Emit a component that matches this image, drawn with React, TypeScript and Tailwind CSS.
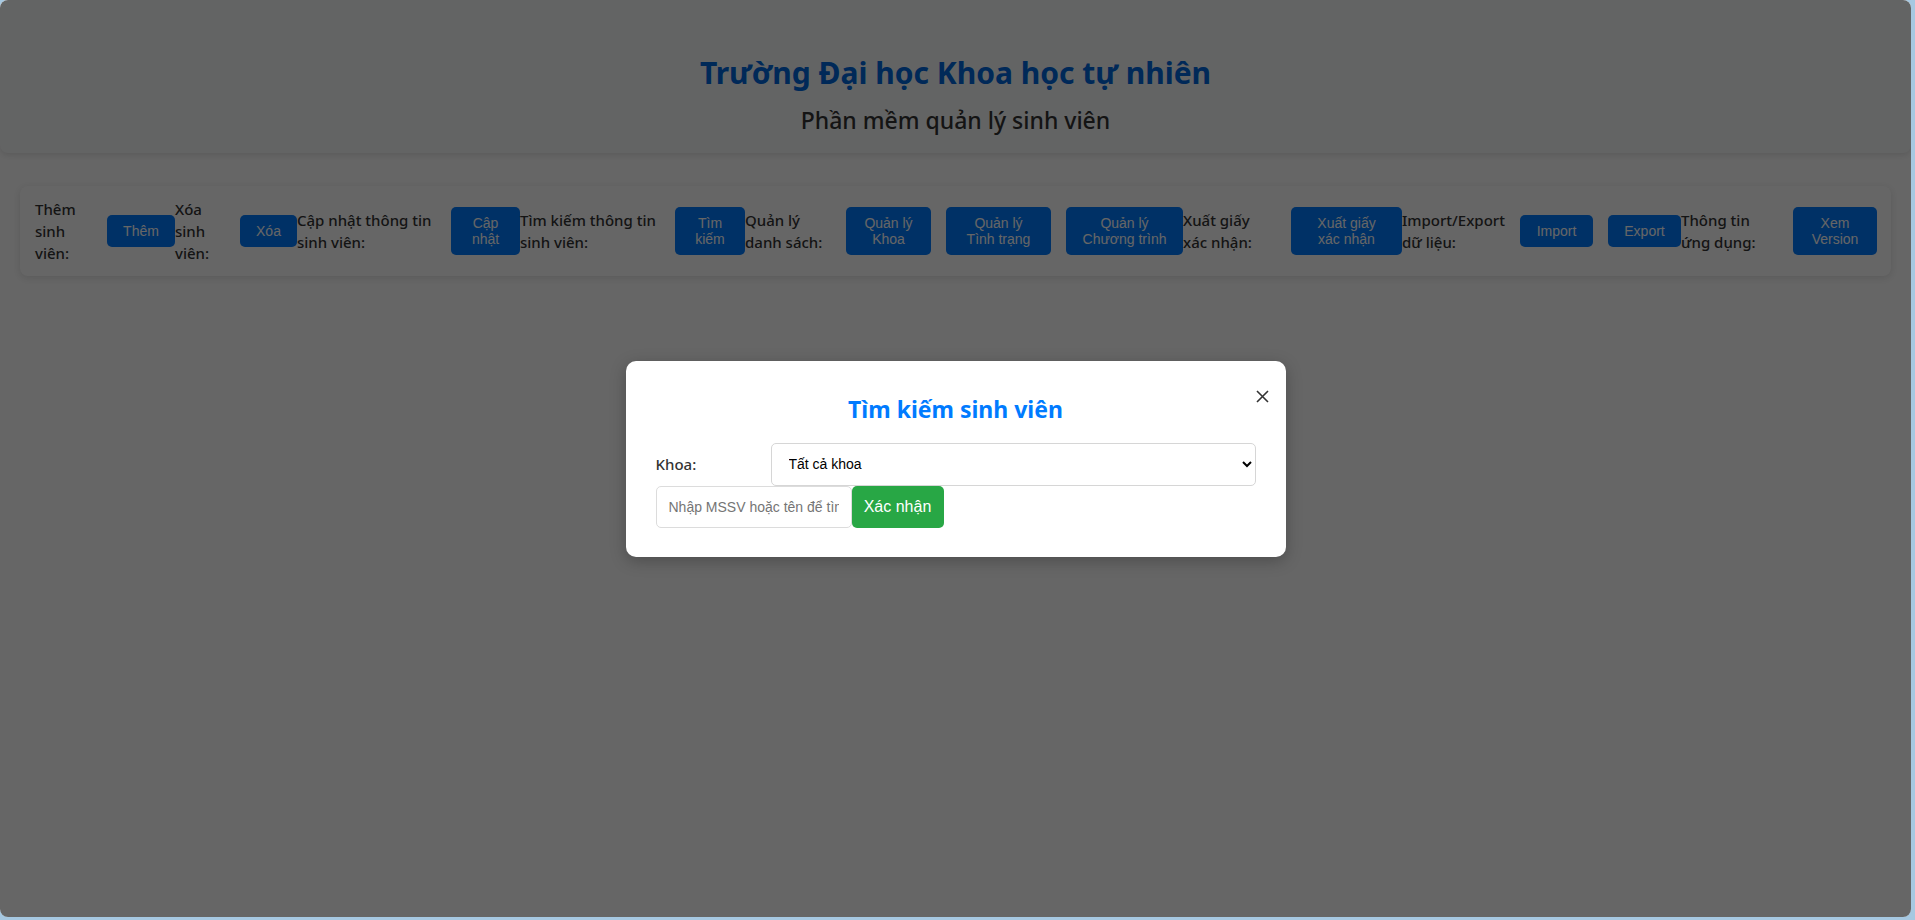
import { useState } from "react";

const font = "font-['Noto_Sans',sans-serif]";

type Group = {
  label: string;
  w: string;
  buttons: { text: string; w: string }[];
};

const groups: Group[] = [
  { label: "Thêm sinh viên:", w: "w-[72px] pr-[24px]", buttons: [{ text: "Thêm", w: "w-[68px]" }] },
  { label: "Xóa sinh viên:", w: "w-[65px] pr-[15px]", buttons: [{ text: "Xóa", w: "w-[57px]" }] },
  { label: "Cập nhật thông tin sinh viên:", w: "w-[154px] pr-[6px]", buttons: [{ text: "Cập nhật", w: "w-[69px]" }] },
  { label: "Tìm kiếm thông tin sinh viên:", w: "w-[155px] pr-[10px]", buttons: [{ text: "Tìm kiếm", w: "w-[70px]" }] },
  {
    label: "Quản lý danh sách:",
    w: "w-[101px] pr-[16px]",
    buttons: [
      { text: "Quản lý Khoa", w: "w-[85px]" },
      { text: "Quản lý Tình trạng", w: "w-[105px]" },
      { text: "Quản lý Chương trình", w: "w-[117px]" },
    ],
  },
  { label: "Xuất giấy xác nhận:", w: "w-[108px] pr-[28px]", buttons: [{ text: "Xuất giấy xác nhận", w: "w-[111px]" }] },
  {
    label: "Import/Export dữ liệu:",
    w: "w-[118px] pr-[8px]",
    buttons: [
      { text: "Import", w: "w-[73px]" },
      { text: "Export", w: "w-[73px]" },
    ],
  },
  { label: "Thông tin ứng dụng:", w: "w-[112px] pr-[27px]", buttons: [{ text: "Xem Version", w: "w-[84px]" }] },
];

function Toolbar() {
  return (
    <div className="mx-[20px] mt-[33px] bg-white rounded-[8px] shadow-[0_2px_8px_rgba(0,0,0,0.12)] px-[15px] py-[12px] flex items-center">
      {groups.map((g) => (
        <div key={g.label} className="flex items-center shrink-0">
          <label className={`${g.w} shrink-0 text-[15px] leading-[22px] text-[#333] font-medium ${font}`}>
            {g.label}
          </label>
          <div className="flex items-center gap-[15px]">
            {g.buttons.map((b) => (
              <button
                key={b.text}
                className={`${b.w} shrink-0 bg-[#007bff] text-white rounded-[5px] px-[15px] py-[8px] text-[14px] leading-[16px] font-['Liberation_Sans',Arial,sans-serif]`}
              >
                {b.text}
              </button>
            ))}
          </div>
        </div>
      ))}
    </div>
  );
}

function SearchModal() {
  const [khoa, setKhoa] = useState("all");
  return (
    <div className="relative w-[660px] bg-white rounded-[10px] px-[30px] pt-[33px] pb-[29px] shadow-[0_4px_16px_rgba(0,0,0,0.25)]">
      <button className="absolute right-[16px] top-[29px] w-[14px] h-[14px] flex items-center justify-center text-[#333]">
        <svg width="13" height="13" viewBox="0 0 13 13" fill="none" stroke="currentColor" strokeWidth="1.6">
          <path d="M1 1 L12 12 M12 1 L1 12" />
        </svg>
      </button>
      <h2 className={`text-center text-[23px] leading-[30px] font-bold text-[#007bff] ${font}`}>
        Tìm kiếm sinh viên
      </h2>
      <div className="flex items-center mt-[19px]">
        <label className={`w-[115px] shrink-0 text-[15px] font-medium text-[#333] ${font}`}>Khoa:</label>
        <select
          value={khoa}
          onChange={(e) => setKhoa(e.target.value)}
          className="flex-1 h-[43px] border border-[#d6d6d6] rounded-[5px] bg-white pl-[13px] pr-[6px] text-[14px] text-black font-['Liberation_Sans',Arial,sans-serif]"
        >
          <option value="all">Tất cả khoa</option>
        </select>
      </div>
      <div className="flex items-center">
        <input
          placeholder="Nhập MSSV hoặc tên để tìm kiếm"
          className="w-[196px] h-[42px] border border-[#dcdcdc] rounded-[5px] px-[12px] text-[14px] placeholder:text-[#757575] font-['Liberation_Sans',Arial,sans-serif] outline-none"
        />
        <button className="h-[42px] w-[92px] bg-[#28a745] text-white rounded-[5px] text-[16px] font-['Liberation_Sans',Arial,sans-serif]">
          Xác nhận
        </button>
      </div>
    </div>
  );
}

export default function App() {
  return (
    <div className="w-[1915px] h-[920px] bg-[#a6c8e1] overflow-hidden">
      <div className="relative w-[1911px] h-[917px] bg-white rounded-[8px] overflow-hidden">
        <header className="bg-[#f8f9fa] rounded-b-[8px] shadow-[0_2px_6px_rgba(0,0,0,0.12)] pt-[53px] pb-[17px] text-center">
          <h1 className={`text-[30px] leading-[39px] font-bold text-[#0066dd] ${font}`}>
            Trường Đại học Khoa học tự nhiên
          </h1>
          <h2 className={`mt-[12px] text-[23px] leading-[32px] font-medium text-[#333] ${font}`}>
            Phần mềm quản lý sinh viên
          </h2>
        </header>
        <Toolbar />
        <div className="absolute inset-0 bg-black/60 flex items-center justify-center">
          <SearchModal />
        </div>
      </div>
    </div>
  );
}
